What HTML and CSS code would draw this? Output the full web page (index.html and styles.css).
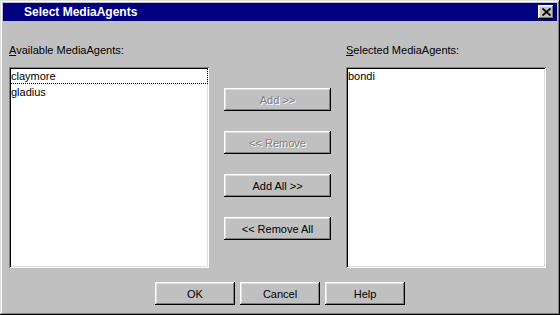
FILE: index.html
```html
<!DOCTYPE html>
<html>
  <head>
    <title>Select MediaAgents</title>
    <link rel="stylesheet" href="styles.css">
  </head>
  <body>
    <div class="window">
      <div class="titlebar">
        <span class="title">Select MediaAgents</span>
        <button class="close" title="Close">
          <svg width="9" height="8" viewBox="0 0 9 8">
            <path d="M0.5 0.5l8 7M8.5 0.5l-8 7" stroke="#000" stroke-width="1.8" fill="none"/>
          </svg>
        </button>
      </div>

      <div class="content">
        <div class="column">
          <label class="caption"><u>A</u>vailable MediaAgents:</label>
          <div class="listbox">
            <div class="item focused">claymore</div>
            <div class="item">gladius</div>
          </div>
        </div>

        <div class="actions">
          <button class="button" disabled>Add &gt;&gt;</button>
          <button class="button" disabled>&lt;&lt; Remove</button>
          <button class="button">Add All &gt;&gt;</button>
          <button class="button">&lt;&lt; Remove All</button>
        </div>

        <div class="column">
          <label class="caption"><u>S</u>elected MediaAgents:</label>
          <div class="listbox">
            <div class="item">bondi</div>
          </div>
        </div>
      </div>

      <div class="footer">
        <button class="button small">OK</button>
        <button class="button small">Cancel</button>
        <button class="button small">Help</button>
      </div>
    </div>
  </body>
</html>
```

FILE: styles.css
```css
body {
  margin: 0;
  font-family: "Liberation Sans", Arial, sans-serif;
  font-size: 11px;
  color: #000;
  background-color: #c0c0c0;
}

.window {
  width: 560px;
  height: 315px;
  box-sizing: border-box;
  padding: 3px;
  background-color: #c0c0c0;
  box-shadow: inset -1px -1px #000, inset 1px 1px #dfdfdf,
    inset -2px -2px #808080, inset 2px 2px #fff;
  display: flex;
  flex-direction: column;
}

.titlebar {
  height: 18px;
  background-color: #000080;
  display: flex;
  align-items: center;
  justify-content: space-between;
  padding: 0 3px 0 21px;
}

.title {
  color: #fff;
  font-weight: bold;
  font-size: 12px;
}

.close {
  width: 16px;
  height: 14px;
  padding: 0;
  border: none;
  background-color: #c0c0c0;
  box-shadow: inset -1px -1px #000, inset 1px 1px #fff,
    inset -2px -2px #808080, inset 2px 2px #dfdfdf;
  display: flex;
  align-items: center;
  justify-content: center;
}

.content {
  display: flex;
  padding: 23px 0 0 6px;
  gap: 15px;
}

.column {
  width: 200px;
  display: flex;
  flex-direction: column;
}

.caption {
  line-height: 13px;
  margin-bottom: 10px;
}

.listbox {
  height: 201px;
  box-sizing: border-box;
  background-color: #fff;
  padding: 1px 1px;
  box-shadow: inset 1px 1px #808080, inset -1px -1px #fff,
    inset 2px 2px #000, inset -2px -2px #dfdfdf;
}

.item {
  height: 16px;
  line-height: 16px;
  padding-left: 1px;
  box-sizing: border-box;
}

.item.focused {
  outline: 1px dotted #000;
  outline-offset: -1px;
}

.actions {
  width: 107px;
  display: flex;
  flex-direction: column;
  gap: 20px;
  padding-top: 44px;
}

.button {
  height: 23px;
  padding: 0;
  border: none;
  font-family: "Liberation Sans", Arial, sans-serif;
  font-size: 11px;
  color: #000;
  background-color: #c0c0c0;
  box-shadow: inset -1px -1px #000, inset 1px 1px #fff,
    inset -2px -2px #808080, inset 2px 2px #dfdfdf;
}

.button:disabled {
  color: #808080;
  text-shadow: 1px 1px #fff;
}

.button.small {
  width: 80px;
}

.footer {
  display: flex;
  justify-content: center;
  gap: 5px;
  margin-top: 14px;
}
```
